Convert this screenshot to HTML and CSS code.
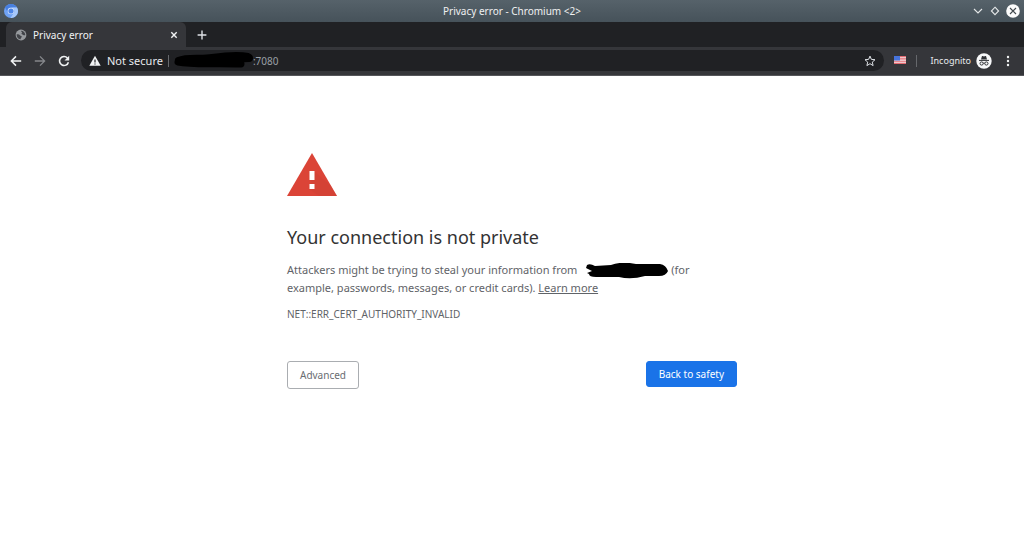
FILE: index.html
```html
<!DOCTYPE html>
<html lang="en">
<head>
<meta charset="utf-8">
<title>Privacy error</title>
<link rel="stylesheet" href="styles.css">
</head>
<body>
<header class="titlebar">
  <svg class="logo" viewBox="0 0 14 14" width="14" height="14" aria-hidden="true">
    <circle cx="7" cy="7" r="7" fill="#6fa3f5"/>
    <path d="M1 3.5A7 7 0 0 1 13 3.5H7A3.5 3.5 0 0 0 3.7 8.2Z" fill="#477fe0"/>
    <path d="M13 3.5A7 7 0 0 1 6.5 14L10 8.8A3.5 3.5 0 0 0 7 3.5Z" fill="#a6c8fb"/>
    <circle cx="7" cy="7" r="3.3" fill="#dce9ff"/>
    <circle cx="7" cy="7" r="2.6" fill="#4e86e6"/>
  </svg>
  <div class="window-title">Privacy error - Chromium &lt;2&gt;</div>
  <div class="window-controls">
    <button class="icon-button" aria-label="Minimize"><svg viewBox="0 0 12 14" width="12" height="14"><path d="M2 5l4 4 4-4" fill="none" stroke="#e4e7e8" stroke-width="1.1"/></svg></button>
    <button class="icon-button" aria-label="Maximize"><svg viewBox="0 0 12 14" width="12" height="14"><path d="M6 3.2L9.6 7 6 10.6 2.4 7Z" fill="none" stroke="#e4e7e8" stroke-width="1.1"/></svg></button>
    <button class="icon-button" aria-label="Close"><svg viewBox="0 0 14 14" width="14" height="14"><circle cx="7" cy="7" r="6.8" fill="#fcfcfc"/><path d="M4 4l6 6M10 4l-6 6" stroke="#42494e" stroke-width="1.1"/></svg></button>
  </div>
</header>
<div class="tabstrip">
  <div class="tab">
    <svg viewBox="0 0 12 12" width="12" height="12" aria-hidden="true"><circle cx="6" cy="6" r="5.4" fill="#96999d"/><path d="M6 1.7A4.3 4.3 0 0 1 10.3 6C9 6.8 8.2 5.8 7.4 5.4 6.3 5 6.2 4.4 7 3.8 7.6 3.2 6 2.8 6 1.7ZM1.7 5.3C3 5 4.3 5.4 4.9 6.2 5.6 7.2 6.8 6.7 6.8 7.8 6.7 8.6 5.6 8.6 5.7 10.3A4.3 4.3 0 0 1 1.7 5.3Z" fill="#414348"/></svg>
    <span class="tab-title">Privacy error</span>
    <button class="icon-button" aria-label="Close tab"><svg viewBox="0 0 8 8" width="8" height="8"><path d="M1.3 1.3l5.4 5.4M6.7 1.3L1.3 6.7" stroke="#f1f3f4" stroke-width="1.4"/></svg></button>
  </div>
  <button class="icon-button new-tab" aria-label="New tab"><svg viewBox="0 0 10 10" width="10" height="10"><path d="M5 .6v8.8M.6 5h8.8" stroke="#dee1e6" stroke-width="1.4"/></svg></button>
</div>
<nav class="toolbar">
  <div class="nav-buttons">
    <button class="icon-button" aria-label="Back"><svg viewBox="0 0 12 12" width="12" height="12"><path d="M11.2 6H1.6M6 1.4L1.4 6 6 10.6" fill="none" stroke="#f1f3f4" stroke-width="1.5"/></svg></button>
    <button class="icon-button" aria-label="Forward"><svg viewBox="0 0 12 12" width="12" height="12"><path d="M.8 6h9.6M6 1.4L10.6 6 6 10.6" fill="none" stroke="#85878b" stroke-width="1.3"/></svg></button>
    <button class="icon-button" aria-label="Reload"><svg viewBox="0 0 12 12" width="12" height="12"><path d="M9.4 3A4.5 4.5 0 1 0 10.4 7.2" fill="none" stroke="#f1f3f4" stroke-width="1.6"/><path d="M11.2.8v4.7H6.5Z" fill="#f1f3f4"/></svg></button>
  </div>
  <div class="omnibox">
    <svg viewBox="0 0 12 12" width="12" height="12" aria-hidden="true"><path d="M6 .8L11.7 10.8H.3Z" fill="#f1f3f4"/><path d="M6 4.4v3M6 8.4v1.2" stroke="#202124" stroke-width="1.2"/></svg>
    <span class="security">Not secure</span>
    <span class="separator"></span>
    <span class="url"><svg viewBox="0 0 80 20" width="80" height="20" aria-hidden="true"><path d="M5 9C15 5 28 8 39 6 53 4 66 3 75 5" fill="none" stroke="#000" stroke-width="6" stroke-linecap="round"/><path d="M5 11C20 14 40 12 68 13" fill="none" stroke="#000" stroke-width="7" stroke-linecap="round"/><path d="M34 9L76 7" stroke="#000" stroke-width="8" stroke-linecap="round"/></svg>:7080</span>
    <button class="icon-button" aria-label="Bookmark"><svg viewBox="0 0 12 12" width="12" height="12"><path d="M6 1.1l1.4 3.3 3.6.3-2.7 2.4.8 3.5L6 8.7l-3.1 1.9.8-3.5L1 4.7l3.6-.3Z" fill="none" stroke="#dee1e6"/></svg></button>
  </div>
  <button class="icon-button flag" aria-label="Flag extension"><svg viewBox="0 0 12 8" width="12" height="8"><path d="M0 0h12v8H0Z" fill="#f3e5e8"/><path d="M0 .6h12M0 2.9h12M0 5.2h12M0 7.4h12" stroke="#e36b72" stroke-width="1.1"/><path d="M0 0h6v4.5H0Z" fill="#4774dc"/></svg></button>
  <span class="separator"></span>
  <div class="incognito">
    <span>Incognito</span>
    <svg viewBox="0 0 16 16" width="16" height="16" aria-hidden="true"><circle cx="8" cy="8" r="7.7" fill="#f8f9fa"/><path d="M5 6.5L5.9 3.3Q6.1 2.8 6.7 3L8 3.4 9.3 3Q9.9 2.8 10.1 3.3L11 6.5Z" fill="#303236"/><path d="M3 7.4h10" stroke="#303236"/><circle cx="5.6" cy="10.5" r="1.6" fill="none" stroke="#303236"/><circle cx="10.4" cy="10.5" r="1.6" fill="none" stroke="#303236"/><path d="M7.2 10.2Q8 9.7 8.8 10.2" fill="none" stroke="#303236" stroke-width=".9"/></svg>
  </div>
  <button class="icon-button" aria-label="Menu"><svg viewBox="0 0 4 12" width="4" height="12"><g fill="#f1f3f4"><circle cx="2" cy="2" r="1.2"/><circle cx="2" cy="6" r="1.2"/><circle cx="2" cy="10" r="1.2"/></g></svg></button>
</nav>
<main class="page">
  <div class="interstitial">
    <svg class="warning" viewBox="0 0 50 43" width="50" height="43" aria-hidden="true"><path d="M25 0L50 43H0Z" fill="#db4437"/><path d="M27 18L44 33 50 43H32L22 36Z" fill="#c93e33" opacity=".35"/><path d="M22.5 18h5v9h-5ZM22.5 31h5v5h-5Z" fill="#fff"/></svg>
    <h1>Your connection is not private</h1>
    <p class="message">Attackers might be trying to steal your information from <svg class="redaction" viewBox="0 0 82 16" width="82" height="16" aria-hidden="true"><path d="M1 2Q4 0 9 3L25 2Q36-2 50 1L74 1Q80 2 82 8 80 13 73 13L59 13Q45 17 33 14L10 14Q3 14 3 11L1 10 6 8 0 5Z" fill="#000"/></svg> (for example, passwords, messages, or credit cards). <a href="#">Learn more</a></p>
    <p class="error-code">NET::ERR_CERT_AUTHORITY_INVALID</p>
    <div class="actions">
      <button class="button">Advanced</button>
      <button class="button primary">Back to safety</button>
    </div>
  </div>
</main>
</body>
</html>
```
FILE: styles.css
```css
* {
  box-sizing: border-box;
}

body {
  margin: 0;
  background: #fff;
  font-family: "Noto Sans", sans-serif;
  font-size: 10px;
  color: #5f6368;
}

svg {
  display: block;
  flex: none;
}

button {
  font: inherit;
}

.icon-button {
  display: flex;
  padding: 0;
  border: 0;
  background: none;
}

.titlebar {
  display: grid;
  grid-template-columns: 1fr auto 1fr;
  align-items: center;
  height: 22px;
  padding: 0 4px;
  background: linear-gradient(#56626a, #46525a);
  color: #eff0f1;
}

.window-controls {
  display: flex;
  justify-content: flex-end;
  align-items: center;
  gap: 5px;
}

.tabstrip {
  display: flex;
  align-items: center;
  height: 25px;
  padding-left: 6px;
  background: #202124;
}

.tab {
  display: flex;
  align-items: center;
  gap: 6px;
  width: 180px;
  height: 25px;
  padding: 0 8px 0 9px;
  border-radius: 6px 6px 0 0;
  background: #35363a;
  color: #f1f3f4;
}

.tab-title {
  flex: 1;
}

.new-tab {
  margin-left: 11px;
}

.toolbar {
  display: flex;
  align-items: center;
  height: 29px;
  padding: 0 14px 1px 10px;
  border-bottom: 1px solid #55565a;
  background: #35363a;
  color: #e8eaed;
}

.nav-buttons {
  display: flex;
  gap: 12px;
}

.omnibox {
  display: flex;
  flex: 1;
  align-items: center;
  height: 21px;
  margin-left: 11px;
  padding: 0 8px;
  border-radius: 11px;
  background: #202124;
}

.security {
  margin: 0 5px 0 6px;
  font-size: 11px;
}

.separator {
  width: 1px;
  height: 12px;
  background: #66686c;
}

.url {
  display: flex;
  flex: 1;
  align-items: center;
  margin-left: 4px;
  color: #9aa0a6;
}

.flag {
  margin: 0 10px 2px;
}

.incognito {
  display: flex;
  align-items: center;
  gap: 5px;
  margin: 0 14px;
  font-size: 9px;
}

.page {
  padding: 77px 24px 24px;
}

.interstitial {
  max-width: 450px;
  margin: 0 auto;
}

h1 {
  margin: 28px 0 11px;
  color: #333;
  font-size: 18px;
  font-weight: 400;
  line-height: 26px;
}

.message {
  max-width: 416px;
  margin: 0;
  font-size: 11px;
  line-height: 18px;
}

.message a {
  color: inherit;
}

.redaction {
  display: inline-block;
  margin-left: 6px;
  vertical-align: middle;
}

.error-code {
  margin: 9px 0 0;
  line-height: 16px;
}

.actions {
  display: flex;
  justify-content: space-between;
  align-items: flex-start;
  margin-top: 39px;
}

.button {
  padding: 5px 12px;
  border: 1px solid #aaadb1;
  border-radius: 3px;
  background: #fff;
  color: #696d72;
  line-height: 16px;
}

.primary {
  padding: 4px 12px;
  border-color: #1a73e8;
  background: #1a73e8;
  color: #fff;
}
```
